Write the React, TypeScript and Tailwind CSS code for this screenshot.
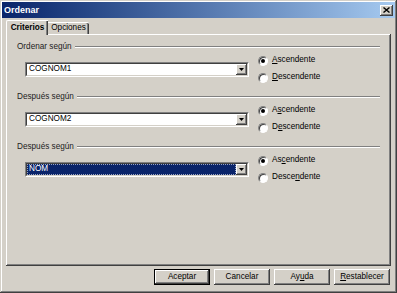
import React from "react";

function Radio({ checked }: { checked?: boolean }) {
  return (
    <span className="w-[10px] h-[10px] shrink-0 rounded-full bg-white border border-t-[#808080] border-l-[#808080] border-b-white border-r-white shadow-[inset_1px_1px_#404040] flex items-center justify-center">
      {checked && <span className="w-[4px] h-[4px] rounded-full bg-black" />}
    </span>
  );
}

function Combo({ value, selected }: { value: string; selected?: boolean }) {
  return (
    <div className="w-[224px] h-[15px] flex border border-t-[#808080] border-l-[#808080] border-b-white border-r-white bg-white">
      <div className="flex-1 flex border-t border-l border-t-[#404040] border-l-[#404040] border-b border-r border-b-[#d4d0c8] border-r-[#d4d0c8]">
        {selected ? (
          <div className="flex-1 flex items-center bg-[#0a246a] text-white pl-[1px] border border-dotted border-[#9aa4c0]">
            NOM
          </div>
        ) : (
          <div className="flex-1 flex items-center pl-[2px]">{value}</div>
        )}
        <div className="w-[11px] flex items-center justify-center bg-[#d4d0c8] shadow-[inset_-1px_-1px_#404040,inset_1px_1px_#ffffff,inset_-2px_-2px_#808080]">
          <svg width="5" height="3" viewBox="0 0 5 3">
            <path d="M0 0H5L2.5 3Z" fill="#000" />
          </svg>
        </div>
      </div>
    </div>
  );
}

function Group({
  label,
  value,
  selected,
  asc,
  desc,
}: {
  label: string;
  value: string;
  selected?: boolean;
  asc: React.ReactNode;
  desc: React.ReactNode;
}) {
  return (
    <div className="flex flex-col mb-[6px]">
      <div className="h-[10px] flex items-center pl-[11px] pr-[11px] text-[#222]">
        <span className="whitespace-nowrap">{label}</span>
        <div className="flex-1 ml-[3px] h-[2px] border-t border-t-[#808080] border-b border-b-white" />
      </div>
      <div className="h-[34px] flex items-center pl-[19px]">
        <Combo value={value} selected={selected} />
        <div className="ml-[9px] flex flex-col">
          <div className="h-[17px] flex items-center gap-[4px]">
            <Radio checked />
            <span>{asc}</span>
          </div>
          <div className="h-[17px] flex items-center gap-[4px]">
            <Radio />
            <span>{desc}</span>
          </div>
        </div>
      </div>
    </div>
  );
}

function Btn({ children, def }: { children: React.ReactNode; def?: boolean }) {
  return (
    <div
      className={
        def
          ? "w-[56px] h-[16px] flex items-center justify-center bg-[#d4d0c8] border border-black shadow-[inset_-1px_-1px_#404040,inset_1px_1px_#ffffff,inset_-2px_-2px_#808080]"
          : "w-[56px] h-[16px] flex items-center justify-center bg-[#d4d0c8] shadow-[inset_-1px_-1px_#404040,inset_1px_1px_#ffffff,inset_-2px_-2px_#808080]"
      }
    >
      {children}
    </div>
  );
}

export default function App() {
  return (
    <div className="w-[397px] h-[293px] bg-[#d4d0c8] p-[2px] flex flex-col shadow-[inset_-1px_-1px_#404040,inset_1px_1px_#d4d0c8,inset_-2px_-2px_#808080,inset_2px_2px_#ffffff] font-['Liberation_Sans',Arial,sans-serif] text-[8.2px] text-black leading-none select-none overflow-hidden">
      <div className="h-[16px] shrink-0 flex items-center justify-between pl-[2px] pr-[2px] bg-gradient-to-r from-[#0a246a] to-[#a6caf0]">
        <span className="text-white font-bold text-[9px]">Ordenar</span>
        <div className="w-[13px] h-[11px] flex items-center justify-center bg-[#d4d0c8] shadow-[inset_-1px_-1px_#404040,inset_1px_1px_#ffffff,inset_-2px_-2px_#808080]">
          <svg width="7" height="6" viewBox="0 0 7 6">
            <path d="M0.5 0.5L6.5 5.5M6.5 0.5L0.5 5.5" stroke="#000" strokeWidth="1.4" />
          </svg>
        </div>
      </div>
      <div className="flex-1 flex flex-col pl-[4px] pr-[4px]">
        <div className="h-[16px] shrink-0 flex items-end">
          <div className="relative z-10 w-[42px] h-[15px] -mb-[1px] flex items-center justify-center font-bold bg-[#d4d0c8] border-t border-l border-white rounded-tl-[2px] shadow-[inset_-1px_0_#404040,inset_-2px_0_#808080]">
            Criterios
          </div>
          <div className="w-[41px] h-[12px] flex items-center justify-center border-t border-white rounded-tr-[2px] shadow-[inset_-1px_0_#404040,inset_-2px_0_#808080]">
            Opciones
          </div>
        </div>
        <div className="h-[232px] shrink-0 flex flex-col pt-[8px] shadow-[inset_-1px_-1px_#404040,inset_1px_1px_#ffffff,inset_-2px_-2px_#808080]">
          <Group
            label="Ordenar según"
            value="COGNOM1"
            asc={<><u>A</u>scendente</>}
            desc={<><u>D</u>escendente</>}
          />
          <Group
            label="Después según"
            value="COGNOM2"
            asc={<>A<u>s</u>cendente</>}
            desc={<>D<u>e</u>scendente</>}
          />
          <Group
            label="Después según"
            value="NOM"
            selected
            asc={<>As<u>c</u>endente</>}
            desc={<>Desce<u>n</u>dente</>}
          />
        </div>
        <div className="h-[25px] shrink-0 flex justify-end items-start pt-[3px] pr-[1px] gap-[4px]">
          <Btn def>Aceptar</Btn>
          <Btn>Cancelar</Btn>
          <Btn>Ay<u>u</u>da</Btn>
          <Btn><u>R</u>establecer</Btn>
        </div>
      </div>
    </div>
  );
}
